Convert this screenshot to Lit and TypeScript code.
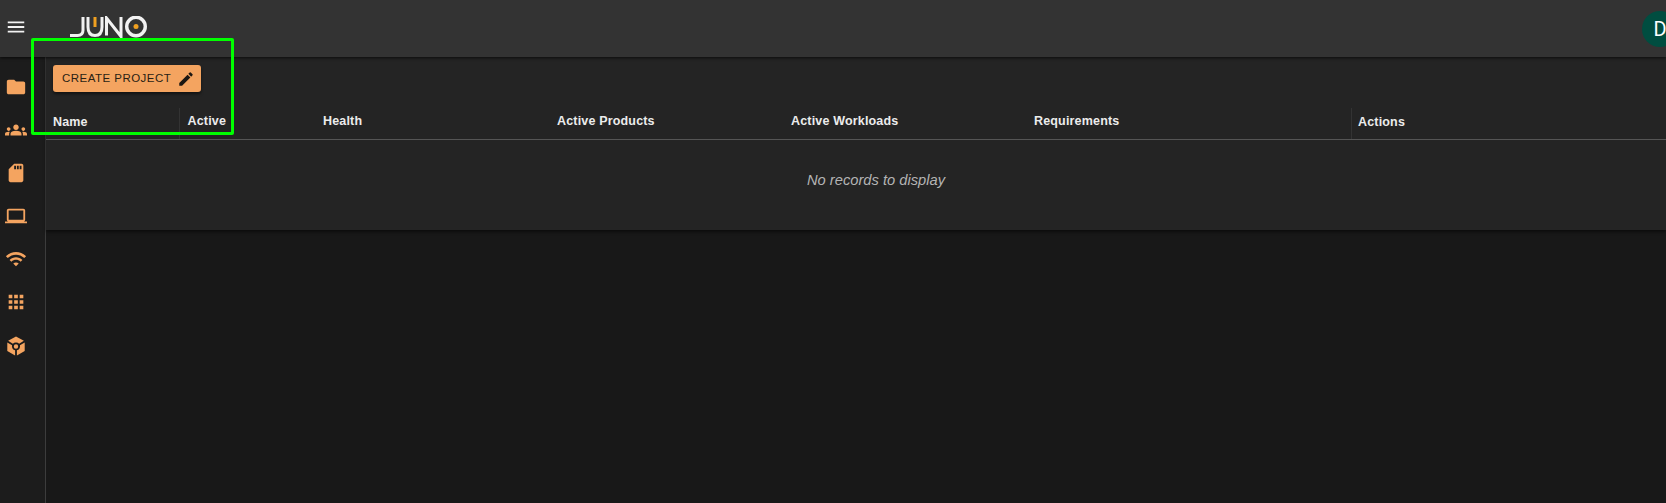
import { LitElement, html, css, svg } from "lit";
import { customElement } from "lit/decorators.js";

const icon = (d: string, cls = "") => html`<svg class=${cls} viewBox="0 0 24 24" width="24" height="24" fill="currentColor"><path d=${d}></path></svg>`;

const NAV = [
  "M10 4H4c-1.1 0-1.99.9-1.99 2L2 18c0 1.1.9 2 2 2h16c1.1 0 2-.9 2-2V8c0-1.1-.9-2-2-2h-8l-2-2z",
  "M12 12.75c1.63 0 3.07.39 4.24.9 1.08.48 1.76 1.56 1.76 2.73V18H6v-1.61c0-1.18.68-2.26 1.76-2.73 1.17-.52 2.61-.91 4.24-.91zM4 13c1.1 0 2-.9 2-2s-.9-2-2-2-2 .9-2 2 .9 2 2 2zm1.13 1.1c-.37-.06-.74-.1-1.13-.1-.99 0-1.93.21-2.78.58C.48 14.9 0 15.62 0 16.43V18h4.5v-1.61c0-.83.23-1.61.63-2.29zM20 13c1.1 0 2-.9 2-2s-.9-2-2-2-2 .9-2 2 .9 2 2 2zm4 3.43c0-.81-.48-1.53-1.22-1.85-.85-.37-1.79-.58-2.78-.58-.39 0-.76.04-1.13.1.4.68.63 1.46.63 2.29V18H24v-1.57zM12 6c1.66 0 3 1.34 3 3s-1.34 3-3 3-3-1.34-3-3 1.34-3 3-3z",
  "M18 2h-8L4.02 8 4 20c0 1.1.9 2 2 2h12c1.1 0 2-.9 2-2V4c0-1.1-.9-2-2-2zm-6 6h-2V4h2v4zm3 0h-2V4h2v4zm3 0h-2V4h2v4z",
  "M20 18c1.1 0 1.99-.9 1.99-2L22 6c0-1.1-.9-2-2-2H4c-1.1 0-2 .9-2 2v10c0 1.1.9 2 2 2H0v2h24v-2h-4zM4 6h16v10H4V6z",
  "M1 9l2 2c4.97-4.97 13.03-4.97 18 0l2-2C16.93 2.93 7.08 2.93 1 9zm8 8l3 3 3-3c-1.65-1.66-4.34-1.66-6 0zm-4-4l2 2c2.76-2.76 7.24-2.76 10 0l2-2C15.14 9.14 8.87 9.14 5 13z",
  "M4 8h4V4H4v4zm6 12h4v-4h-4v4zm-6 0h4v-4H4v4zm0-6h4v-4H4v4zm6 0h4v-4h-4v4zm6-10v4h4V4h-4zm-6 4h4V4h-4v4zm6 6h4v-4h-4v4zm0 6h4v-4h-4v4z",
  "M12 1.5 20.6 6.4 15.4 9.6A4.4 4.4 0 0 0 12 8.2 4.4 4.4 0 0 0 8.6 9.6L3.4 6.4 12 1.5ZM2.5 8.1 7.7 11.3A4.4 4.4 0 0 0 11 16.7V22.3L2.5 17.5V8.1ZM21.5 8.1V17.5L13 22.3V16.7A4.4 4.4 0 0 0 16.3 11.3L21.5 8.1ZM12 10.2A2.4 2.4 0 1 1 12 15 2.4 2.4 0 0 1 12 10.2Z",
];

const COLUMNS = ["Health", "Active Products", "Active Workloads", "Requirements"];

@customElement("app-root")
export class AppRoot extends LitElement {
  static styles = css`
    :host {
      display: block;
      position: relative;
      width: 1666px;
      height: 503px;
      overflow: hidden;
      background: #181818;
      font-family: "Liberation Sans", Arial, sans-serif;
      color: #fff;
    }
    .bar {
      height: 57px;
      box-sizing: border-box;
      background: #333;
      box-shadow: 0 1px 3px rgba(0, 0, 0, 0.7);
      display: flex;
      align-items: center;
      position: relative;
      z-index: 2;
    }
    .menu {
      width: 22px;
      height: 22px;
      margin-left: 5px;
      margin-top: -3px;
      color: #f2f2f2;
      flex: none;
    }
    .logo {
      margin-left: 43px;
      margin-top: -3px;
      flex: none;
    }
    .avatar {
      margin-left: auto;
      margin-right: -12px;
      width: 36px;
      height: 36px;
      border-radius: 50%;
      background: #004d40;
      display: flex;
      align-items: center;
      justify-content: center;
      font: 20px Roboto, sans-serif;
      flex: none;
    }
    .body {
      display: flex;
      height: 446px;
    }
    .side {
      width: 46px;
      box-sizing: border-box;
      border-right: 1px solid #3c3c3c;
      background: #1c1c1c;
      color: #f4a460;
      display: flex;
      flex-direction: column;
      align-items: flex-start;
      padding: 18.5px 0 0 5px;
      gap: 21.2px;
      flex: none;
    }
    .side svg {
      width: 22px;
      height: 22px;
      display: block;
      flex: none;
    }
    .main {
      flex: 1;
      min-width: 0;
    }
    .card {
      height: 173px;
      background: #242424;
      box-shadow: 0 2px 3px rgba(0, 0, 0, 0.5);
      padding-top: 8px;
      box-sizing: border-box;
    }
    .btn {
      margin-left: 7px;
      width: 148px;
      height: 27px;
      box-sizing: border-box;
      background: #f4a460;
      color: #2a1f14;
      border: 0;
      border-radius: 3px;
      padding: 0 6px 0 9px;
      display: flex;
      align-items: center;
      justify-content: space-between;
      font: 11.5px "Liberation Sans", Arial, sans-serif;
      letter-spacing: 0.47px;
      box-shadow: 0 2px 3px rgba(0, 0, 0, 0.5);
    }
    .btn span {
      padding-bottom: 2px;
    }
    .btn svg {
      width: 18px;
      height: 18px;
      color: #1c1712;
      flex: none;
    }
    .head {
      margin-top: 16px;
      height: 31px;
      display: grid;
      grid-template-columns: 134px 136px 234px 234px 243px 324px 1fr;
      border-bottom: 1px solid #555;
      font-size: 12.5px;
      font-weight: 700;
      letter-spacing: 0.17px;
      color: #ececec;
    }
    .cell {
      display: flex;
      align-items: center;
      padding-bottom: 5px;
      box-sizing: border-box;
    }
    .name {
      padding: 0 0 3px 7px;
      border-right: 1px solid #333;
    }
    .active {
      padding-left: 7.5px;
    }
    .plain {
      padding-left: 7px;
    }
    .actions {
      padding: 0 0 3px 6px;
      border-left: 1px solid #333;
    }
    .empty {
      text-align: center;
      font-style: italic;
      font-size: 14.7px;
      color: #b4b4b4;
      padding: 32px 0 0 40px;
    }
    .mark {
      position: absolute;
      left: 31px;
      top: 38px;
      width: 203px;
      height: 97px;
      box-sizing: border-box;
      border: 3px solid #00ff00;
      border-radius: 2px;
      z-index: 5;
      pointer-events: none;
    }
  `;

  render() {
    return html`
      <header class="bar">
        ${icon("M3 18h18v-2H3v2zm0-5h18v-2H3v2zm0-7v2h18V6H3z", "menu")}
        <svg class="logo" width="77" height="22" viewBox="0 0 77 22" fill="none">
          ${svg`
            <path d="M0 19.5H7.5Q13 19.5 13 14V1" stroke="#f2f2f2" stroke-width="3"></path>
            <path d="M18 1V11Q18 19.5 25 19.5Q32 19.5 32 11V1" stroke="#f2f2f2" stroke-width="3"></path>
            <path d="M25 1V11" stroke="#f0a020" stroke-width="3"></path>
            <path d="M36.5 19.5V2L51 20.5V1" stroke="#f2f2f2" stroke-width="3"></path>
            <circle cx="66" cy="10.5" r="9.3" stroke="#f2f2f2" stroke-width="3.4"></circle>
            <circle cx="66" cy="10.5" r="2.5" fill="#f0a020"></circle>
          `}
        </svg>
        <div class="avatar">D</div>
      </header>
      <div class="body">
        <nav class="side">${NAV.map((d) => icon(d))}</nav>
        <main class="main">
          <section class="card">
            <button class="btn">
              <span>CREATE PROJECT</span>
              ${icon("M3 17.25V21h3.75L17.81 9.94l-3.75-3.75L3 17.25zM20.71 7.04c.39-.39.39-1.02 0-1.41l-2.34-2.34a.9959.9959 0 00-1.41 0l-1.83 1.83 3.75 3.75 1.83-1.83z")}
            </button>
            <div class="head">
              <div class="cell name">Name</div>
              <div class="cell active">Active</div>
              ${COLUMNS.map((c) => html`<div class="cell plain">${c}</div>`)}
              <div class="cell actions">Actions</div>
            </div>
            <div class="empty">No records to display</div>
          </section>
        </main>
      </div>
      <div class="mark"></div>
    `;
  }
}
